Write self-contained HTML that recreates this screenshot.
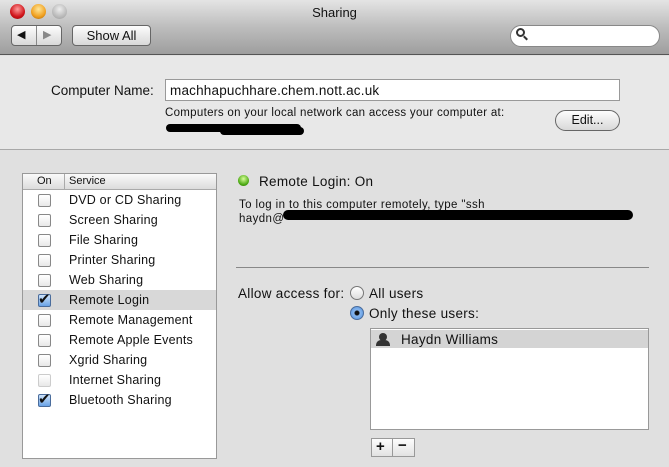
<!DOCTYPE html><html><head><style>
*{margin:0;padding:0;box-sizing:border-box}
body{width:669px;height:467px;overflow:hidden;background:#e0e0e0;font-family:"Liberation Sans",sans-serif;font-size:12px;color:#111;position:relative}
.a{position:absolute}
.tb{left:0;top:0;width:669px;height:55px;background:linear-gradient(#e4e4e4,#bdbdbd 50%,#9e9e9e);border-bottom:1px solid #555}
.dot{width:15px;height:15px;border-radius:50%;top:4px}
.btn{background:linear-gradient(#fdfdfd,#d8d8d8);border:1px solid #666;border-radius:4px}
.cb{width:13px;height:13px;border:1px solid #888;border-radius:2px;background:linear-gradient(#fff,#e8e8e8);left:15px}
.cbk{background:linear-gradient(#cfe4fb,#6aa3e6);border-color:#4a6c9c}
.row{left:0;width:193px;height:20px}
.row span{position:absolute;left:46px;top:3px;font-size:12.5px;letter-spacing:0.2px}
</style></head><body>
<div class="a tb"></div>
<div class="a dot" style="left:10px;background:radial-gradient(circle at 50% 35%,#ff9c9c,#d0141a 60%,#8a0c0c)"></div>
<div class="a dot" style="left:31px;background:radial-gradient(circle at 50% 35%,#ffe79a,#f0a020 60%,#a0600a)"></div>
<div class="a dot" style="left:52px;background:radial-gradient(circle at 50% 35%,#eee,#bbb 60%,#999)"></div>
<div class="a" style="left:0;top:5px;width:669px;text-align:center;font-size:13px">Sharing</div>
<div class="a btn" style="left:11px;top:25px;width:51px;height:21px"></div>
<div class="a" style="left:36px;top:26px;width:1px;height:19px;background:#888"></div>
<div class="a" style="left:17px;top:28px;font-size:11px">◀</div>
<div class="a" style="left:43px;top:28px;font-size:11px;color:#888">▶</div>
<div class="a btn" style="left:72px;top:25px;width:79px;height:21px;text-align:center;line-height:19px;font-size:13px">Show All</div>
<div class="a" style="left:510px;top:25px;width:150px;height:22px;background:#fff;border-radius:11px;border:1px solid #888"></div>
<div class="a" style="left:516px;top:28px;width:9px;height:9px;border:2px solid #333;border-radius:50%"></div>
<div class="a" style="left:523px;top:37px;width:5px;height:2px;background:#333;transform:rotate(45deg)"></div>
<div class="a" style="left:0;top:56px;width:669px;height:94px;background:#e8e8e8;border-bottom:1px solid #a8a8a8"></div>
<div class="a" style="left:51px;top:83px;font-size:13.5px">Computer Name:</div>
<div class="a" style="left:165px;top:79px;width:455px;height:22px;background:#fff;border:1px solid #999;padding:3px 4px;font-size:13.5px;letter-spacing:0.2px">machhapuchhare.chem.nott.ac.uk</div>
<div class="a" style="left:165px;top:107px;font-size:11.5px;letter-spacing:0.3px">Computers on your local network can access your computer at:</div>
<div class="a" style="left:166px;top:124px;width:135px;height:8px;background:#000;border-radius:4px"></div>
<div class="a" style="left:220px;top:127px;width:84px;height:8px;background:#000;border-radius:4px"></div>
<div class="a btn" style="left:555px;top:110px;width:65px;height:21px;border-radius:11px;text-align:center;line-height:19px;font-size:12.5px">Edit...</div>
<div class="a" style="left:22px;top:173px;width:195px;height:286px;background:#fff;border:1px solid #999">
<div class="a" style="left:0;top:0;width:193px;height:16px;background:linear-gradient(#fafafa,#dcdcdc);border-bottom:1px solid #aaa;font-size:11px"><span class="a" style="left:14px;top:1px">On</span><span class="a" style="left:41px;top:0;width:1px;height:15px;background:#aaa"></span><span class="a" style="left:46px;top:1px">Service</span></div>
<div class="a row" style="top:16px"><div class="a cb" style="top:4px"></div><span>DVD or CD Sharing</span></div>
<div class="a row" style="top:36px"><div class="a cb" style="top:4px"></div><span>Screen Sharing</span></div>
<div class="a row" style="top:56px"><div class="a cb" style="top:4px"></div><span>File Sharing</span></div>
<div class="a row" style="top:76px"><div class="a cb" style="top:4px"></div><span>Printer Sharing</span></div>
<div class="a row" style="top:96px"><div class="a cb" style="top:4px"></div><span>Web Sharing</span></div>
<div class="a row" style="top:116px;background:#d8d8d8"><div class="a cb cbk" style="top:4px"></div><span style="left:15px;top:0;font-size:15px">✔</span><span>Remote Login</span></div>
<div class="a row" style="top:136px"><div class="a cb" style="top:4px"></div><span>Remote Management</span></div>
<div class="a row" style="top:156px"><div class="a cb" style="top:4px"></div><span>Remote Apple Events</span></div>
<div class="a row" style="top:176px"><div class="a cb" style="top:4px"></div><span>Xgrid Sharing</span></div>
<div class="a row" style="top:196px"><div class="a cb" style="top:4px;border-color:#ccc"></div><span>Internet Sharing</span></div>
<div class="a row" style="top:216px"><div class="a cb cbk" style="top:4px"></div><span style="left:15px;top:0;font-size:15px">✔</span><span>Bluetooth Sharing</span></div>
</div>
<div class="a" style="left:238px;top:175px;width:11px;height:11px;border-radius:50%;background:radial-gradient(circle at 50% 35%,#d8ff9a,#4aa812 65%,#2a6a08)"></div>
<div class="a" style="left:259px;top:174px;font-size:13.5px;letter-spacing:0.3px">Remote Login: On</div>
<div class="a" style="left:239px;top:198px;font-size:11.5px;line-height:14px;letter-spacing:0.4px">To log in to this computer remotely, type "ssh<br>haydn@</div>
<div class="a" style="left:283px;top:210px;width:350px;height:10px;background:#000;border-radius:5px"></div>
<div class="a" style="left:460px;top:212px;width:110px;height:8px;background:#000;border-radius:4px"></div>
<div class="a" style="left:236px;top:267px;width:413px;height:1px;background:#888"></div>
<div class="a" style="left:238px;top:286px;font-size:13.5px;letter-spacing:0.3px">Allow access for:</div>
<div class="a" style="left:350px;top:286px;width:14px;height:14px;border-radius:50%;border:1px solid #777;background:linear-gradient(#fff,#ddd)"></div>
<div class="a" style="left:369px;top:286px;font-size:13.5px;letter-spacing:0.3px">All users</div>
<div class="a" style="left:350px;top:306px;width:14px;height:14px;border-radius:50%;border:1px solid #4a6c9c;background:radial-gradient(circle,#111 2px,#8ab8ef 3px,#4f8fdc)"></div>
<div class="a" style="left:369px;top:306px;font-size:13.5px;letter-spacing:0.3px">Only these users:</div>
<div class="a" style="left:370px;top:328px;width:279px;height:102px;background:#fff;border:1px solid #999">
<div class="a" style="left:0;top:1px;width:277px;height:18px;background:#d4d4d4"></div>
<div class="a" style="left:8px;top:4px;width:8px;height:8px;border-radius:50%;background:#333"></div>
<div class="a" style="left:5px;top:11px;width:14px;height:6px;border-radius:5px 5px 0 0;background:#333"></div>
<div class="a" style="left:30px;top:3px;font-size:13.5px;letter-spacing:0.3px">Haydn Williams</div>
</div>
<div class="a" style="left:371px;top:438px;width:44px;height:19px;background:linear-gradient(#fdfdfd,#e2e2e2);border:1px solid #999"></div>
<div class="a" style="left:392px;top:438px;width:1px;height:19px;background:#999"></div>
<div class="a" style="left:376px;top:438px;font-size:15px;font-weight:bold">+</div>
<div class="a" style="left:398px;top:437px;font-size:15px;font-weight:bold">−</div>
</body></html>
